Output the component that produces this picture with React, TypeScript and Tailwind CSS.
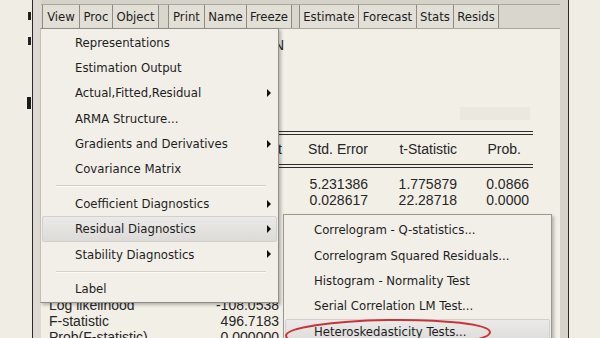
import React from 'react'

const uiFont = "font-['DejaVu_Sans_Condensed','DejaVu_Sans',sans-serif] [font-stretch:condensed] text-[13px] text-[#1d1d1d]"
const tableFont = "font-['Liberation_Sans',Arial,sans-serif] text-[14px] text-[#262626]"

type Item = { label?: string; sub?: boolean; active?: boolean; sep?: boolean }

const viewMenu: Item[] = [
  { label: 'Representations' },
  { label: 'Estimation Output' },
  { label: 'Actual,Fitted,Residual', sub: true },
  { label: 'ARMA Structure...' },
  { label: 'Gradients and Derivatives', sub: true },
  { label: 'Covariance Matrix' },
  { sep: true },
  { label: 'Coefficient Diagnostics', sub: true },
  { label: 'Residual Diagnostics', sub: true, active: true },
  { label: 'Stability Diagnostics', sub: true },
  { sep: true },
  { label: 'Label' },
]

const residMenu: Item[] = [
  { label: 'Correlogram - Q-statistics...' },
  { label: 'Correlogram Squared Residuals...' },
  { label: 'Histogram - Normality Test' },
  { label: 'Serial Correlation LM Test...' },
  { label: 'Heteroskedasticity Tests...', active: true },
]

const toolbar = [
  [['View', 'w-[37px]'], ['Proc', 'w-[33px]'], ['Object', 'w-[46px]']],
  [['Print', 'w-[36px]'], ['Name', 'w-[42px]'], ['Freeze', 'w-[45px]']],
  [['Estimate', 'w-[59px]'], ['Forecast', 'w-[58px]'], ['Stats', 'w-[37px]'], ['Resids', 'w-[45px]']],
]

const coefRows = [
  ['C', '9.290000', '5.231386', '1.775879', '0.0866'],
  ['INCOME', '0.637768', '0.028617', '22.28718', '0.0000'],
]

const stats = [
  ['R-squared', '0.938835'],
  ['Adjusted R-squared', '0.936868'],
  ['S.E. of regression', '6.244512'],
  ['Sum squared resid', '1208.799'],
  ['Log likelihood', '-108.0538'],
  ['F-statistic', '496.7183'],
  ['Prob(F-statistic)', '0.000000'],
]

function Arrow() {
  return <span className="h-0 w-0 border-y-[4px] border-l-[4px] border-y-transparent border-l-[#111]" />
}

function MenuRow({ item, pl }: { item: Item; pl: string }) {
  if (item.sep) {
    return (
      <div className="flex h-[9.4px] items-center pl-[15px] pr-[12px]">
        <div className="h-[2px] w-full border-t border-[#d4d1c9] bg-white/70" />
      </div>
    )
  }
  return (
    <div
      className={`mx-[1px] flex h-[25.3px] items-center justify-between pr-[5px] ${pl} ${
        item.active ? 'rounded-[2px] border border-[#d2d0cb] bg-gradient-to-b from-[#ebeae8] to-[#dcdbd8]' : 'border border-transparent'
      }`}
    >
      <span className="whitespace-nowrap">{item.label}</span>
      {item.sub && <Arrow />}
    </div>
  )
}

export default function App() {
  return (
    <div className="relative flex h-[338px] w-[600px] overflow-hidden bg-[#f0ede4]">
      {/* fragments of the window behind */}
      <div className="flex w-[32px] shrink-0 flex-col items-end pr-[1px]">
        <div className="mt-[12px] h-[8px] w-[3px] bg-[#222]" />
        <div className="mt-[17px] h-[8px] w-[3px] bg-[#222]" />
        <div className="mt-[52px] h-[12px] w-[4px] bg-[#1a1a1a]" />
      </div>

      {/* EViews equation window */}
      <div className="flex w-[537px] shrink-0 border-x border-[#2a2a2a]">
        <div className="w-[8px] shrink-0 bg-[#dedad3]" />
        <div className="flex w-[519px] shrink-0 flex-col bg-[#f2efe7]">
          {/* toolbar */}
          <div className={`flex h-[29px] shrink-0 flex-col bg-[#d9d6ce] ${uiFont}`}>
            <div className="h-[4px] bg-[#d5d2ca]" />
            <div className="flex h-[25px] items-stretch border-y border-[#a9a69e] pl-[1px]">
              {toolbar.map((group, gi) => (
                <div key={gi} className={`flex border-r border-[#8e8b84] ${gi === 1 ? 'ml-[9px]' : gi === 2 ? 'ml-[7px]' : ''}`}>
                  {group.map(([label, w]) => (
                    <div key={label} className={`flex items-center justify-center border-l border-[#8e8b84] bg-[#e2dfd7] ${w}`}>
                      {label}
                    </div>
                  ))}
                </div>
              ))}
            </div>
          </div>

          {/* estimation output */}
          <div className={`flex flex-col pl-[3px] ${tableFont}`}>
            <div className="mt-[8px] w-[240px] overflow-hidden whitespace-nowrap text-right leading-[16px]">
              Dependent Variable: CONSUMPTION
            </div>
            <div className="mt-[54px] ml-[416px] h-[13px] w-[70px] bg-[#ebe8df]" />
            <div className="mt-[11px] w-[489px]">
              <div className="h-[1px] bg-[#2e2e2e]" />
              <div className="mt-[2px] h-[1px] bg-[#2e2e2e]" />
              <div className="flex h-[29px] items-center">
                <span className="w-[146px] pl-[5px]">Variable</span>
                <span className="w-[92px] text-right">Coefficient</span>
                <span className="w-[86px] text-right">Std. Error</span>
                <span className="w-[89px] text-right">t-Statistic</span>
                <span className="w-[72px] pr-[8px] text-right">Prob.</span>
              </div>
              <div className="h-[1px] bg-[#2e2e2e]" />
              <div className="mt-[2px] h-[1px] bg-[#2e2e2e]" />
              <div className="pt-[8px]">
                {coefRows.map(r => (
                  <div key={r[0]} className="flex h-[16px] items-center">
                    <span className="w-[146px] pl-[5px]">{r[0]}</span>
                    <span className="w-[92px] pr-[6px] text-right">{r[1]}</span>
                    <span className="w-[86px] text-right">{r[2]}</span>
                    <span className="w-[89px] text-right">{r[3]}</span>
                    <span className="w-[72px] text-right">{r[4]}</span>
                  </div>
                ))}
              </div>
            </div>
            <div className="mt-[25px] flex flex-col">
              {stats.map(([k, v]) => (
                <div key={k} className="flex h-[16px] w-[235px] items-center justify-between pl-[5px]">
                  <span>{k}</span>
                  <span>{v}</span>
                </div>
              ))}
            </div>
          </div>
        </div>
        <div className="w-[8px] shrink-0 bg-[#d6d3cb]" />
      </div>

      <div className="flex-1" />

      {/* View menu */}
      <div
        className={`absolute left-[40px] top-[28px] w-[239px] border border-[#8f8d88] border-l-[#c3c0b8] bg-[#f1efe8] pt-[1px] shadow-[2px_2px_3px_rgba(0,0,0,0.25)] ${uiFont}`}
      >
        {viewMenu.map((item, i) => (
          <MenuRow key={i} item={item} pl="pl-[32px]" />
        ))}
      </div>

      {/* Residual Diagnostics submenu */}
      <div
        className={`absolute left-[283px] top-[214px] h-[140px] w-[269px] border border-[#9a9892] bg-[#f1efe8] pt-[2.5px] shadow-[2px_2px_3px_rgba(0,0,0,0.25)] ${uiFont}`}
      >
        {residMenu.map((item, i) => (
          <MenuRow key={i} item={item} pl="pl-[28px]" />
        ))}
      </div>

      {/* red hand-drawn mark */}
      <svg className="absolute left-[284px] top-[314px]" width="216" height="44" viewBox="0 0 216 44">
        <ellipse cx="104" cy="20" rx="102" ry="14" fill="none" stroke="#c8343a" strokeWidth="2" transform="rotate(-1 104 20)" />
      </svg>
    </div>
  )
}
